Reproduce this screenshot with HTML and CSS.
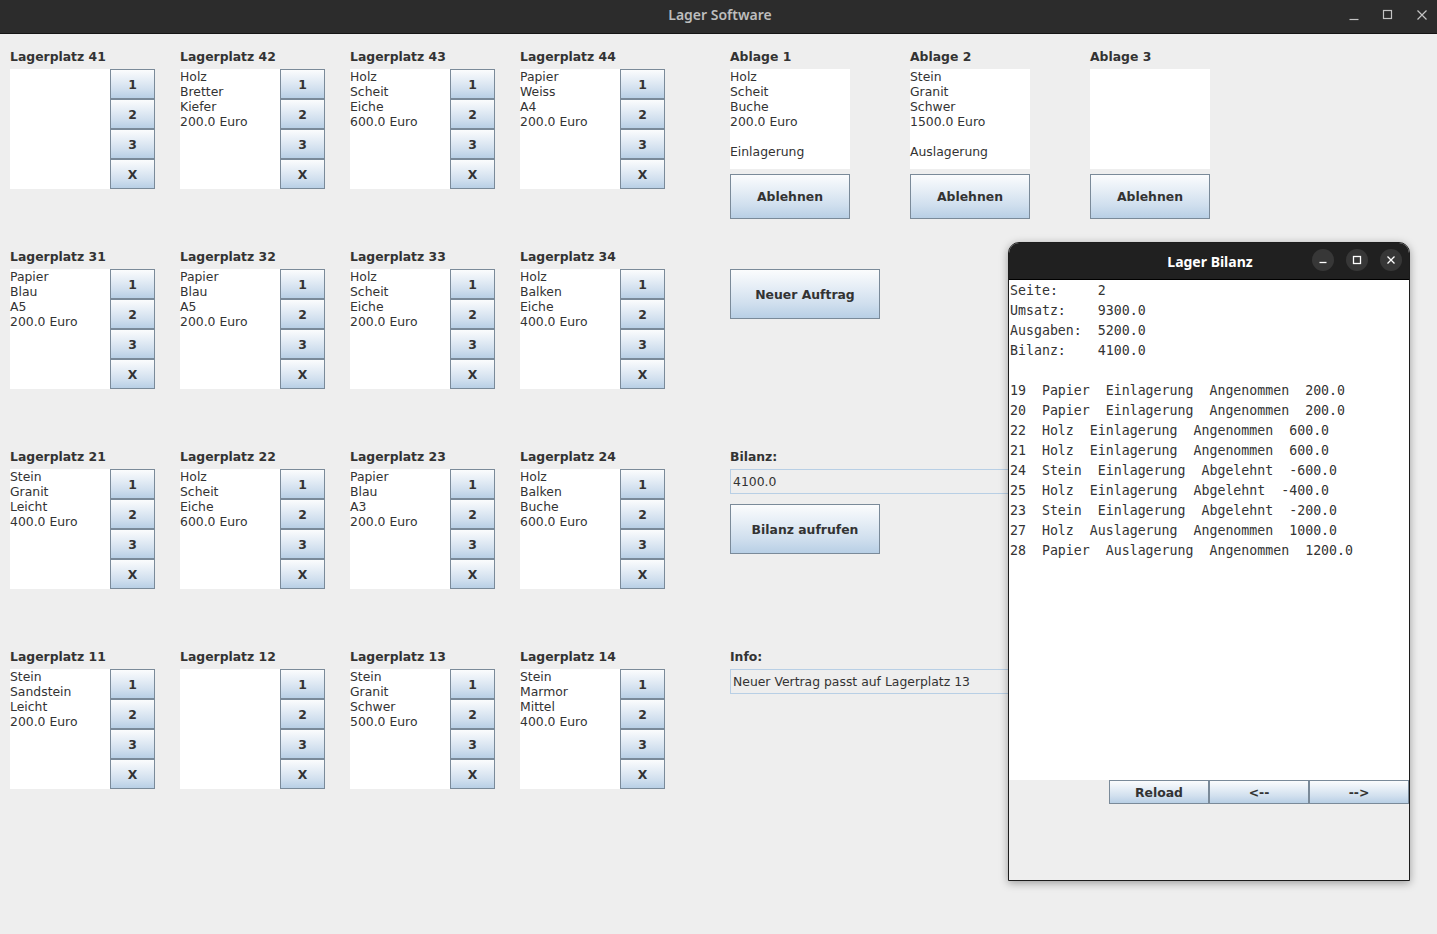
FILE: index.html
```html
<!DOCTYPE html>
<html lang="de">
<head>
<meta charset="utf-8">
<title>Lager Software</title>
<link rel="stylesheet" href="styles.css">
</head>
<body>
<div class="app">
  <header class="titlebar">
    <span class="title">Lager Software</span>
    <div class="wincontrols">
      <svg width="12" height="12" viewBox="0 0 12 12"><path d="M1.5 10.5h9" stroke="#c4c4c4" stroke-width="1.2"/></svg>
      <svg width="12" height="12" viewBox="0 0 12 12"><rect x="1.5" y="1.5" width="8" height="8" fill="none" stroke="#c4c4c4" stroke-width="1.2"/></svg>
      <svg width="12" height="12" viewBox="0 0 12 12"><path d="M1.5 1.5l9 9M10.5 1.5l-9 9" stroke="#c4c4c4" stroke-width="1.2"/></svg>
    </div>
  </header>

  <main class="content">
    <section class="lager">
      <div class="platz"><div class="lbl">Lagerplatz 41</div><div class="body"><div class="area"></div><div class="btns"><button class="jb">1</button><button class="jb">2</button><button class="jb">3</button><button class="jb">X</button></div></div></div>
      <div class="platz"><div class="lbl">Lagerplatz 42</div><div class="body"><div class="area">Holz<br>Bretter<br>Kiefer<br>200.0 Euro</div><div class="btns"><button class="jb">1</button><button class="jb">2</button><button class="jb">3</button><button class="jb">X</button></div></div></div>
      <div class="platz"><div class="lbl">Lagerplatz 43</div><div class="body"><div class="area">Holz<br>Scheit<br>Eiche<br>600.0 Euro</div><div class="btns"><button class="jb">1</button><button class="jb">2</button><button class="jb">3</button><button class="jb">X</button></div></div></div>
      <div class="platz"><div class="lbl">Lagerplatz 44</div><div class="body"><div class="area">Papier<br>Weiss<br>A4<br>200.0 Euro</div><div class="btns"><button class="jb">1</button><button class="jb">2</button><button class="jb">3</button><button class="jb">X</button></div></div></div>

      <div class="platz"><div class="lbl">Lagerplatz 31</div><div class="body"><div class="area">Papier<br>Blau<br>A5<br>200.0 Euro</div><div class="btns"><button class="jb">1</button><button class="jb">2</button><button class="jb">3</button><button class="jb">X</button></div></div></div>
      <div class="platz"><div class="lbl">Lagerplatz 32</div><div class="body"><div class="area">Papier<br>Blau<br>A5<br>200.0 Euro</div><div class="btns"><button class="jb">1</button><button class="jb">2</button><button class="jb">3</button><button class="jb">X</button></div></div></div>
      <div class="platz"><div class="lbl">Lagerplatz 33</div><div class="body"><div class="area">Holz<br>Scheit<br>Eiche<br>200.0 Euro</div><div class="btns"><button class="jb">1</button><button class="jb">2</button><button class="jb">3</button><button class="jb">X</button></div></div></div>
      <div class="platz"><div class="lbl">Lagerplatz 34</div><div class="body"><div class="area">Holz<br>Balken<br>Eiche<br>400.0 Euro</div><div class="btns"><button class="jb">1</button><button class="jb">2</button><button class="jb">3</button><button class="jb">X</button></div></div></div>

      <div class="platz"><div class="lbl">Lagerplatz 21</div><div class="body"><div class="area">Stein<br>Granit<br>Leicht<br>400.0 Euro</div><div class="btns"><button class="jb">1</button><button class="jb">2</button><button class="jb">3</button><button class="jb">X</button></div></div></div>
      <div class="platz"><div class="lbl">Lagerplatz 22</div><div class="body"><div class="area">Holz<br>Scheit<br>Eiche<br>600.0 Euro</div><div class="btns"><button class="jb">1</button><button class="jb">2</button><button class="jb">3</button><button class="jb">X</button></div></div></div>
      <div class="platz"><div class="lbl">Lagerplatz 23</div><div class="body"><div class="area">Papier<br>Blau<br>A3<br>200.0 Euro</div><div class="btns"><button class="jb">1</button><button class="jb">2</button><button class="jb">3</button><button class="jb">X</button></div></div></div>
      <div class="platz"><div class="lbl">Lagerplatz 24</div><div class="body"><div class="area">Holz<br>Balken<br>Buche<br>600.0 Euro</div><div class="btns"><button class="jb">1</button><button class="jb">2</button><button class="jb">3</button><button class="jb">X</button></div></div></div>

      <div class="platz"><div class="lbl">Lagerplatz 11</div><div class="body"><div class="area">Stein<br>Sandstein<br>Leicht<br>200.0 Euro</div><div class="btns"><button class="jb">1</button><button class="jb">2</button><button class="jb">3</button><button class="jb">X</button></div></div></div>
      <div class="platz"><div class="lbl">Lagerplatz 12</div><div class="body"><div class="area"></div><div class="btns"><button class="jb">1</button><button class="jb">2</button><button class="jb">3</button><button class="jb">X</button></div></div></div>
      <div class="platz"><div class="lbl">Lagerplatz 13</div><div class="body"><div class="area">Stein<br>Granit<br>Schwer<br>500.0 Euro</div><div class="btns"><button class="jb">1</button><button class="jb">2</button><button class="jb">3</button><button class="jb">X</button></div></div></div>
      <div class="platz"><div class="lbl">Lagerplatz 14</div><div class="body"><div class="area">Stein<br>Marmor<br>Mittel<br>400.0 Euro</div><div class="btns"><button class="jb">1</button><button class="jb">2</button><button class="jb">3</button><button class="jb">X</button></div></div></div>
    </section>

    <section class="side">
      <div class="siderow ablagen">
        <div class="ablage"><div class="lbl">Ablage 1</div><div class="abox">Holz<br>Scheit<br>Buche<br>200.0 Euro<br><br>Einlagerung</div><button class="jb big">Ablehnen</button></div>
        <div class="ablage"><div class="lbl">Ablage 2</div><div class="abox">Stein<br>Granit<br>Schwer<br>1500.0 Euro<br><br>Auslagerung</div><button class="jb big">Ablehnen</button></div>
        <div class="ablage"><div class="lbl">Ablage 3</div><div class="abox"></div><button class="jb big">Ablehnen</button></div>
      </div>
      <div class="siderow auftrag">
        <button class="jb wide">Neuer Auftrag</button>
      </div>
      <div class="siderow">
        <div class="lbl">Bilanz:</div>
        <div class="field">4100.0</div>
        <button class="jb wide">Bilanz aufrufen</button>
      </div>
      <div class="siderow">
        <div class="lbl">Info:</div>
        <div class="field">Neuer Vertrag passt auf Lagerplatz 13</div>
      </div>
    </section>
  </main>
</div>

<div class="bilanzwin">
  <div class="btitle">
    <span class="btext">Lager Bilanz</span>
    <div class="bctrls">
      <span class="circ"><svg width="12" height="12" viewBox="0 0 12 12"><path d="M2.5 8.5h7" stroke="#fff" stroke-width="1.3"/></svg></span>
      <span class="circ"><svg width="12" height="12" viewBox="0 0 12 12"><rect x="2.5" y="2.5" width="7" height="7" fill="none" stroke="#fff" stroke-width="1.3"/></svg></span>
      <span class="circ"><svg width="12" height="12" viewBox="0 0 12 12"><path d="M2.5 2.5l7 7M9.5 2.5l-7 7" stroke="#fff" stroke-width="1.3"/></svg></span>
    </div>
  </div>
  <pre class="report">Seite:     2
Umsatz:    9300.0
Ausgaben:  5200.0
Bilanz:    4100.0

19  Papier  Einlagerung  Angenommen  200.0
20  Papier  Einlagerung  Angenommen  200.0
22  Holz  Einlagerung  Angenommen  600.0
21  Holz  Einlagerung  Angenommen  600.0
24  Stein  Einlagerung  Abgelehnt  -600.0
25  Holz  Einlagerung  Abgelehnt  -400.0
23  Stein  Einlagerung  Abgelehnt  -200.0
27  Holz  Auslagerung  Angenommen  1000.0
28  Papier  Auslagerung  Angenommen  1200.0</pre>
  <div class="bbar">
    <button class="jb nav">Reload</button>
    <button class="jb nav">&lt;--</button>
    <button class="jb nav">--&gt;</button>
  </div>
</div>
</body>
</html>
```

FILE: styles.css
```css
* { box-sizing: border-box; }
html, body { margin: 0; padding: 0; }
body {
  width: 1437px;
  height: 934px;
  overflow: hidden;
  background: #eeeeee;
  font-family: "DejaVu Sans", sans-serif;
  color: #333333;
  position: relative;
}
.app { width: 1437px; height: 934px; display: flex; flex-direction: column; }

.titlebar {
  height: 34px;
  background: #2c2c2c;
  border-bottom: 1px solid #141414;
  display: flex;
  align-items: center;
  justify-content: center;
  position: relative;
  flex-shrink: 0;
}
.title {
  font-family: "Noto Sans", "Open Sans", sans-serif;
  font-weight: 600;
  font-size: 14px;
  color: #bdbdbd;
  margin-top: -4px;
  margin-left: 3px;
}
.wincontrols {
  position: absolute;
  right: 9px;
  top: 9px;
  display: flex;
  gap: 22px;
}

.content {
  display: flex;
  padding: 12px 0 0 10px;
  flex: 1;
}
.lager {
  display: grid;
  grid-template-columns: repeat(4, 170px);
  grid-auto-rows: 200px;
  width: 720px;
}
.lbl {
  font-weight: bold;
  font-size: 12.4px;
  height: 23px;
  padding-top: 1px;
  line-height: 20px;
  color: #333333;
  white-space: nowrap;
}
.body { display: flex; }
.area {
  width: 100px;
  height: 120px;
  background: #ffffff;
  font-size: 12.4px;
  line-height: 15px;
  color: #333333;
}
.btns { display: flex; flex-direction: column; width: 45px; }

.jb {
  font-family: "DejaVu Sans", sans-serif;
  font-weight: bold;
  font-size: 12.4px;
  color: #333333;
  border: 1px solid #7a8a99;
  background: linear-gradient(to bottom, #fbfcfd 0%, #e6eef6 35%, #d0dfee 70%, #b8cfe5 100%);
  padding: 0;
  margin: 0;
  cursor: default;
}
.btns .jb { height: 30px; width: 45px; }

.side { display: flex; flex-direction: column; width: 600px; }
.siderow { height: 200px; }
.ablagen { display: flex; gap: 60px; }
.ablage { width: 120px; }
.abox {
  width: 120px;
  height: 100px;
  background: #ffffff;
  font-size: 12.4px;
  line-height: 15px;
  margin-bottom: 5px;
}
.jb.big { width: 120px; height: 45px; }
.auftrag { padding-top: 23px; }
.jb.wide { width: 150px; height: 50px; }
.field {
  width: 320px;
  height: 25px;
  border: 1px solid #b8cfe5;
  background: #eeeeee;
  font-size: 12.4px;
  line-height: 23px;
  padding-left: 2px;
  margin-bottom: 10px;
  white-space: nowrap;
}

.bilanzwin {
  position: absolute;
  left: 1008px;
  top: 242px;
  width: 402px;
  height: 639px;
  background: #eeeeee;
  border: 1px solid #1c1c1c;
  border-radius: 11px 11px 0 0;
  box-shadow: 0 2px 8px rgba(0,0,0,0.35);
  display: flex;
  flex-direction: column;
  overflow: hidden;
}
.btitle {
  height: 37px;
  background: #202020;
  border-bottom: 1px solid #000;
  display: flex;
  align-items: center;
  justify-content: center;
  position: relative;
  flex-shrink: 0;
}
.btext {
  font-family: "Noto Sans", "Open Sans", sans-serif;
  font-weight: bold;
  font-size: 14px;
  color: #ffffff;
  margin-left: 2px;
}
.bctrls {
  position: absolute;
  right: 7px;
  top: 6px;
  display: flex;
  gap: 12px;
}
.circ {
  width: 22px;
  height: 22px;
  border-radius: 50%;
  background: #373737;
  display: flex;
  align-items: center;
  justify-content: center;
}
.report {
  margin: 0;
  height: 500px;
  background: #ffffff;
  font-family: "DejaVu Sans Mono", monospace;
  font-size: 13.25px;
  line-height: 20px;
  color: #333333;
  padding: 1px 0 0 1px;
  flex-shrink: 0;
}
.bbar {
  display: flex;
  justify-content: flex-end;
}
.jb.nav { width: 100px; height: 24px; }
```
